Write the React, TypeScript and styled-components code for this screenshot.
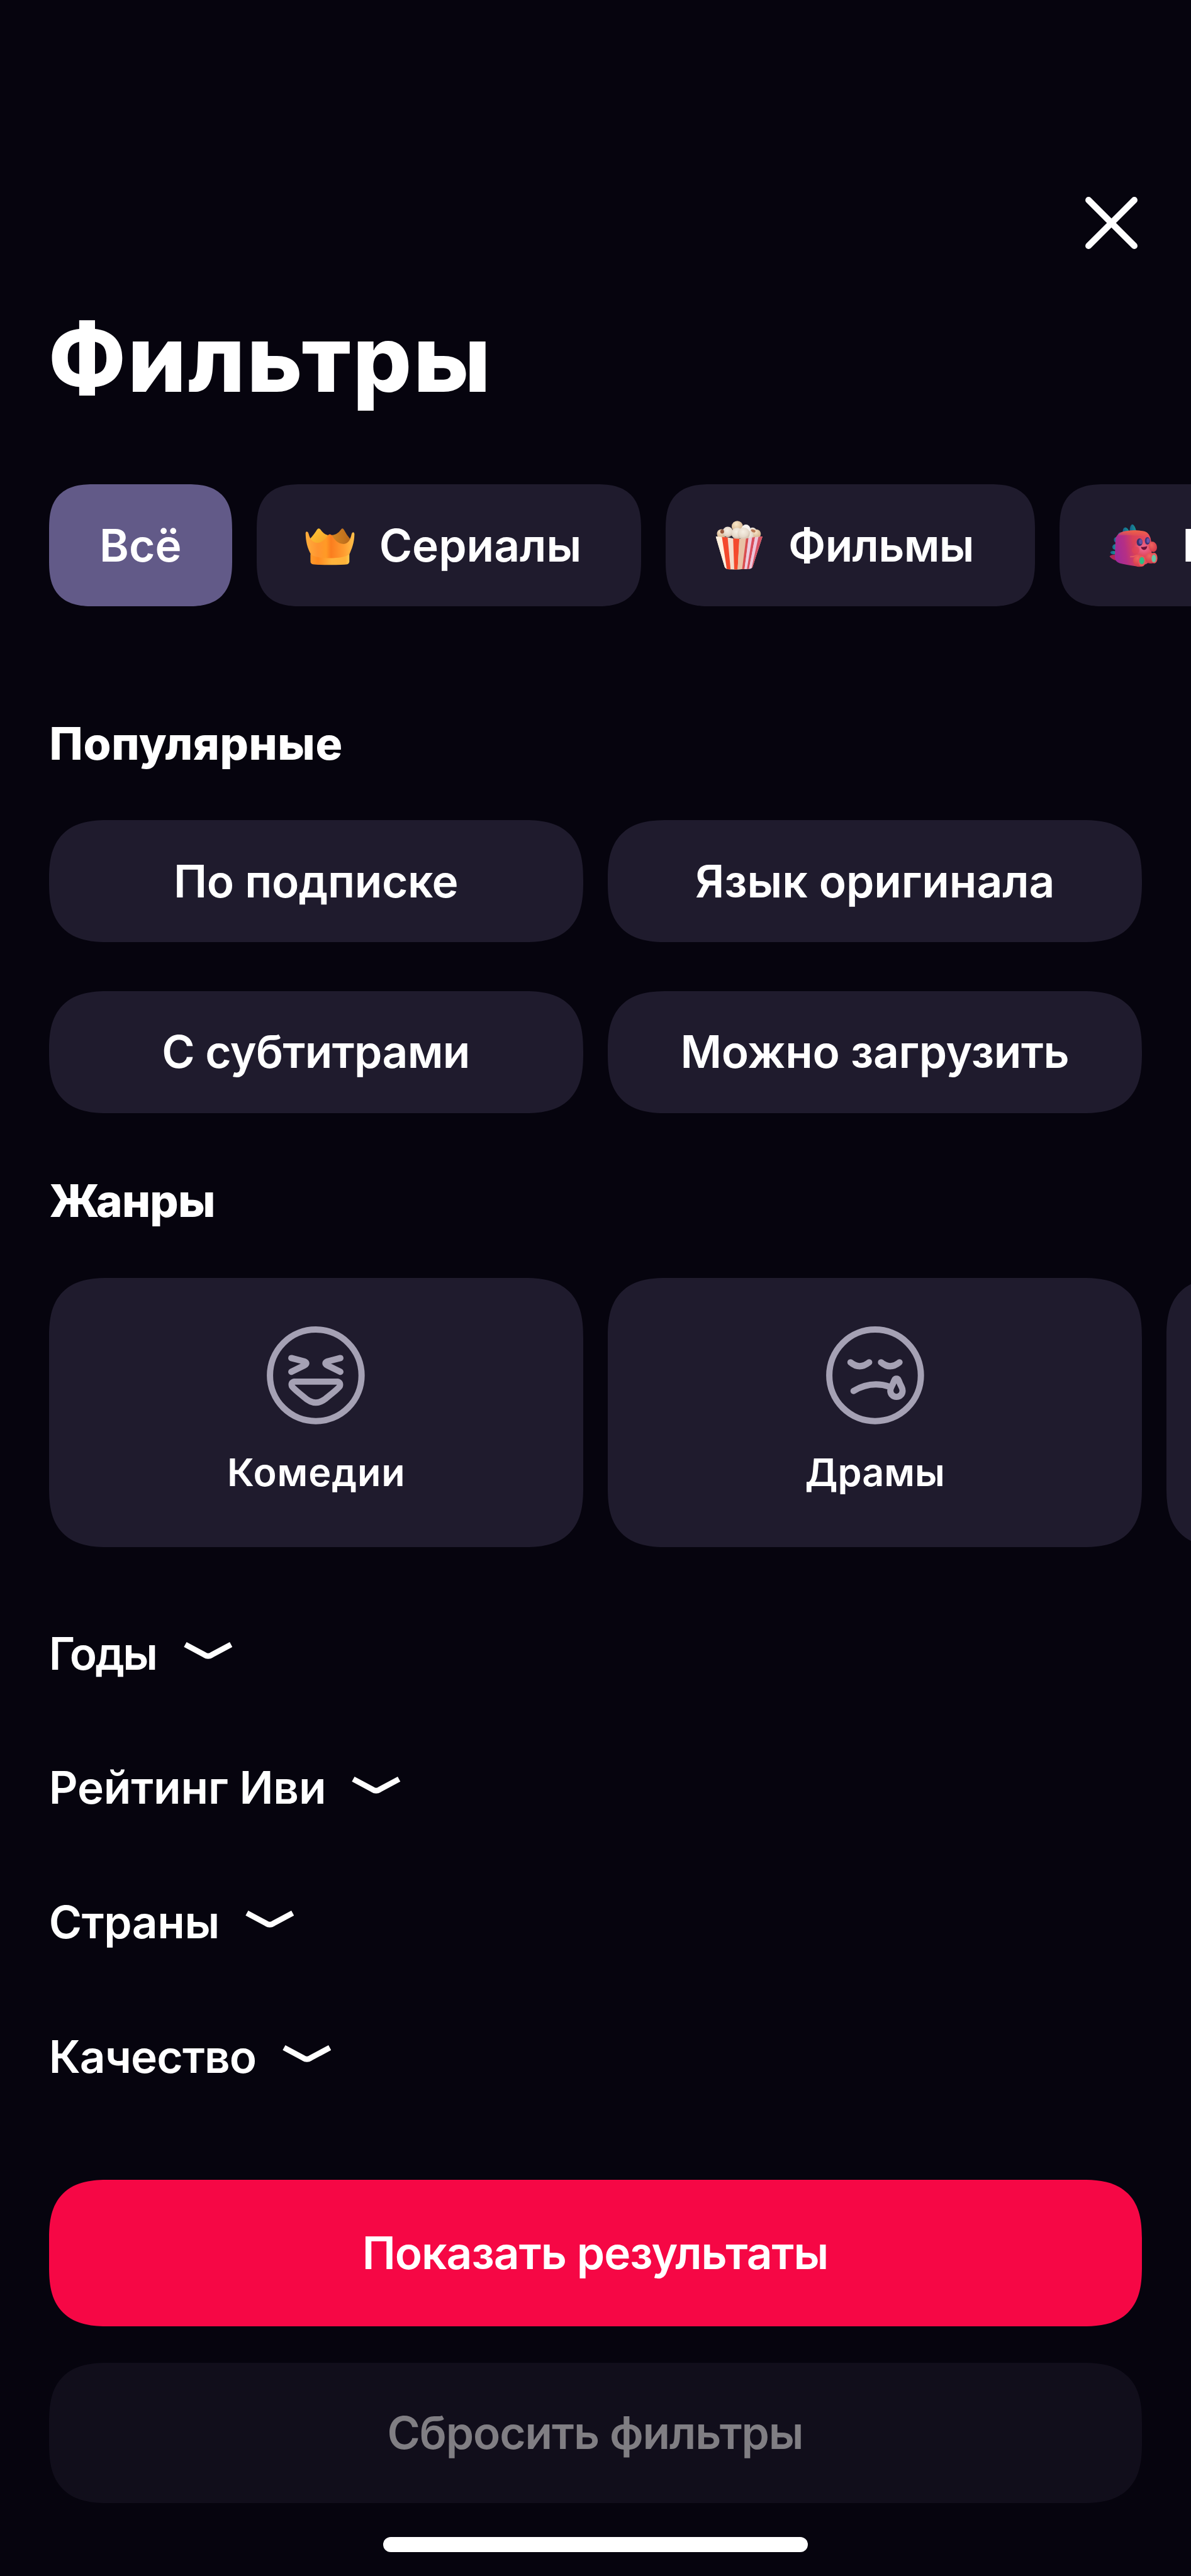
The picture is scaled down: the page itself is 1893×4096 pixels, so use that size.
import React from 'react';
import styled, { createGlobalStyle, css } from 'styled-components';

/* Design units are sixths of a point; the screen is 390pt wide. */
const UNIT = 1893 / 2340;
const u = (n: number) => `${(n * UNIT).toFixed(3)}px`;

const color = {
  bg: '#06040e',
  surface: '#1f1b2d',
  active: '#625a88',
  accent: '#f60745',
  disabled: '#110e1b',
  muted: '#a5a1b4',
};

const GlobalStyle = createGlobalStyle`
  html, body { margin: 0; padding: 0; background: ${color.bg}; }
  * { box-sizing: border-box; }
  button { font: inherit; color: inherit; border: 0; padding: 0; background: none; }
`;

const smallCorners = css`
  border-radius: ${u(73)};
  @supports (corner-shape: superellipse(1.4)) {
    border-radius: ${u(90)};
    corner-shape: superellipse(1.42);
  }
`;

const largeCorners = css`
  border-radius: ${u(96)};
  @supports (corner-shape: superellipse(1.4)) {
    border-radius: ${u(118)};
    corner-shape: superellipse(1.4);
  }
`;

const Screen = styled.main`
  display: flex;
  flex-direction: column;
  width: 1893px;
  height: 4096px;
  overflow: hidden;
  background: ${color.bg};
  color: #fff;
  font-family: Inter, 'Liberation Sans', sans-serif;
  font-size: ${u(88)};
  font-weight: 600;
  line-height: ${u(120)};
  white-space: nowrap;
`;

const TopBar = styled.header`
  display: flex;
  flex: none;
  justify-content: flex-end;
  height: ${u(597)};
  padding: ${u(378)} ${u(96)} 0;
`;

const CloseButton = styled.button`
  display: block;
  width: ${u(120)};
  height: ${u(120)};
  svg { display: block; width: 100%; height: 100%; }
`;

/* $track is the letter spacing; the margin drops it after the last letter. */
const Text = styled.span<{ $track?: number }>`
  display: inline-block;
  letter-spacing: ${(p) => p.$track ?? 0}px;
  margin-right: ${(p) => -(p.$track ?? 0)}px;
`;

const Title = styled.h1`
  flex: none;
  margin: 0;
  padding-left: ${u(95)};
  font-size: ${u(182)};
  font-weight: 800;
  line-height: ${u(216)};
`;

const Heading = styled.h2<{ $gap: number }>`
  flex: none;
  margin: ${(p) => u(p.$gap)} 0 0;
  padding-left: ${u(97)};
  font-size: ${u(88)};
  font-weight: 800;
  line-height: ${u(120)};
`;

const Scroller = styled.div<{ $gap: number }>`
  display: flex;
  flex: none;
  gap: ${u(48)};
  margin-top: ${(p) => u(p.$gap)};
  padding-left: ${u(96)};
  overflow: hidden;
`;

const Pill = styled.button<{ $width: number; $active?: boolean }>`
  display: flex;
  flex: none;
  align-items: center;
  justify-content: ${(p) => (p.$active ? 'center' : 'flex-start')};
  gap: ${u(37)};
  width: ${(p) => u(p.$width)};
  height: ${u(240)};
  padding: 0 ${u(84)};
  background: ${(p) => (p.$active ? color.active : color.surface)};
  ${smallCorners}
  svg { display: block; flex: none; width: ${u(120)}; height: ${u(120)}; }
`;

const OptionGrid = styled.div`
  display: grid;
  flex: none;
  grid-template-columns: 1fr 1fr;
  gap: ${u(96)} ${u(48)};
  margin-top: ${u(90)};
  padding: 0 ${u(96)};
`;

const Option = styled.button`
  height: ${u(240)};
  text-align: center;
  background: ${color.surface};
  ${largeCorners}
`;

const GenreCard = styled.button`
  display: flex;
  flex: none;
  flex-direction: column;
  align-items: center;
  gap: ${u(44)};
  width: ${u(1050)};
  height: ${u(529)};
  padding-top: ${u(92)};
  font-size: ${u(75.5)};
  line-height: ${u(96)};
  background: ${color.surface};
  ${largeCorners}
  svg { display: block; flex: none; width: ${u(200)}; height: ${u(200)}; }
`;

const Sections = styled.div`
  flex: none;
  margin-top: ${u(78)};
  padding-left: ${u(96)};
`;

const SectionRow = styled.button`
  display: flex;
  align-items: center;
  gap: ${u(50)};
  height: ${u(264)};
  svg { display: block; width: ${u(96)}; height: ${u(36)}; margin-bottom: ${u(12)}; }
`;

const Actions = styled.footer`
  display: flex;
  flex: none;
  flex-direction: column;
  gap: ${u(72)};
  margin-top: ${u(110)};
  padding: 0 ${u(96)};
`;

const Action = styled.button<{ $disabled?: boolean }>`
  height: ${(p) => u(p.$disabled ? 276 : 288)};
  text-align: center;
  color: ${(p) => (p.$disabled ? '#807e83' : '#fff')};
  background: ${(p) => (p.$disabled ? color.disabled : color.accent)};
  ${largeCorners}
`;

const HomeIndicator = styled.div`
  flex: none;
  align-self: center;
  width: ${u(834)};
  height: ${u(30)};
  margin-top: ${u(66)};
  border-radius: ${u(15)};
  background: #fff;
`;

const CloseIcon = () => (
  <svg viewBox="0 0 120 120" fill="none" stroke="#fff" strokeWidth="12.5" strokeLinecap="round">
    <path d="M15 15 105 105M105 15 15 105" />
  </svg>
);

const ChevronIcon = () => (
  <svg viewBox="0 0 96 36" fill="none" stroke="#fff" strokeWidth="11">
    <path d="M3 6 41 26.5Q48 31 55 26.5L93 6" />
  </svg>
);

const CrownIcon = () => (
  <svg viewBox="84 96 360 360">
    <defs>
      <linearGradient id="crownBack" x1="0" x2="1" y1="0" y2="1">
        <stop offset="0" stopColor="#ffca3a" />
        <stop offset="1" stopColor="#f29a22" />
      </linearGradient>
      <linearGradient id="crownShade" x1="0" x2="1">
        <stop offset="0" stopColor="#d98a24" />
        <stop offset="1" stopColor="#b9691a" />
      </linearGradient>
      <linearGradient id="crownFront" x1="0" x2="1">
        <stop offset="0" stopColor="#ffae3c" />
        <stop offset=".25" stopColor="#ff9430" />
        <stop offset=".42" stopColor="#ff9a25" />
        <stop offset=".52" stopColor="#fb7d1e" />
        <stop offset=".78" stopColor="#ff9c30" />
        <stop offset="1" stopColor="#ffc04a" />
      </linearGradient>
      <linearGradient id="crownBand" x1="0" x2="1">
        <stop offset="0" stopColor="#ff9a2b" />
        <stop offset=".2" stopColor="#ff8a20" />
        <stop offset=".55" stopColor="#ffb43c" />
        <stop offset=".9" stopColor="#ffb23a" />
        <stop offset="1" stopColor="#ffca50" />
      </linearGradient>
    </defs>
    <path fill="url(#crownBack)" d="M146 236Q174 205 187 182Q197 168 208 181Q226 208 250 214L262 250L160 275Z" />
    <path fill="url(#crownShade)" d="M258 214Q304 218 328 182Q337 168 346 182Q360 210 382 236L365 275L285 262Z" />
    <path
      fill="url(#crownFront)"
      d="M120 204Q120 193 128 193Q135 194 138 206C146 240 165 260 190 260C222 258 240 232 251 216Q263 202 275 216C288 240 310 266 345 267C372 264 384 240 391 208Q394 197 401 197Q408 198 408 208C407 260 392 296 377 330V362H150V325C130 290 121 250 120 204Z"
    />
    <path fill="url(#crownBand)" d="M149 327C180 358 345 358 378 327V372Q376 382 366 386Q340 390 264 390Q190 390 163 386Q150 382 149 372Z" />
  </svg>
);

const PopcornIcon = () => (
  <svg viewBox="66 96 360 360">
    <defs>
      <radialGradient id="corn" cx=".45" cy=".35" r=".7">
        <stop offset="0" stopColor="#f6efe4" />
        <stop offset=".6" stopColor="#e6dacb" />
        <stop offset="1" stopColor="#c3ae9b" />
      </radialGradient>
      <radialGradient id="cornWarm" cx=".4" cy=".3" r=".75">
        <stop offset="0" stopColor="#f8e7c9" />
        <stop offset="1" stopColor="#cfa982" />
      </radialGradient>
      <clipPath id="bucket">
        <path d="M109 222 150 226 180 228 215 234 250 236 290 234 325 228 385 222 326 402Q322 412 305 413L262 415Q225 420 185 416Q164 412 161 400Z" />
      </clipPath>
    </defs>
    <circle cx="143" cy="206" r="27" fill="url(#cornWarm)" />
    <circle cx="180" cy="196" r="31" fill="url(#corn)" />
    <ellipse cx="147" cy="193" rx="11" ry="12" fill="#9a573c" />
    <circle cx="326" cy="194" r="25" fill="url(#corn)" />
    <circle cx="348" cy="207" r="27" fill="url(#cornWarm)" />
    <ellipse cx="330" cy="189" rx="14" ry="8" fill="#b97855" transform="rotate(25 330 189)" />
    <circle cx="308" cy="218" r="26" fill="url(#corn)" />
    <circle cx="236" cy="163" r="33" fill="url(#cornWarm)" />
    <circle cx="287" cy="178" r="26" fill="#f7f3f0" />
    <circle cx="235" cy="204" r="34" fill="url(#corn)" />
    <circle cx="274" cy="205" r="36" fill="url(#corn)" />
    <g clipPath="url(#bucket)">
      <path fill="#f3dccb" d="M100 210H400V425H100Z" />
      <path fill="#fff0de" d="M105 215H145L178 420H150Z" />
      <path fill="#f4492c" d="M144 215H178L197 420H175Z" />
      <path fill="#f4492c" d="M211 215H250L238 420H218Z" />
      <path fill="#e8c1a5" d="M249 215H293L267 420H238Z" />
      <path fill="#d94d50" d="M290 215H306L278 420H264Z" />
      <path fill="#edcadd" d="M304 215H328L292 420H278Z" />
      <path fill="#d94d5c" d="M326 215H343L304 420H292Z" />
      <path fill="#edc5da" d="M343 215H364L320 420H304Z" />
      <path fill="#d65264" d="M363 215H395L335 420H318Z" />
    </g>
  </svg>
);

const DinoIcon = () => (
  <svg viewBox="318 246 360 360">
    <defs>
      <linearGradient id="dinoBody" x1="0" x2="1" y1=".35" y2=".2">
        <stop offset="0" stopColor="#a22b98" />
        <stop offset=".25" stopColor="#b52f85" />
        <stop offset=".5" stopColor="#d94158" />
        <stop offset="1" stopColor="#e84c60" />
      </linearGradient>
      <linearGradient id="dinoTop" x1="0" x2="0" y1="0" y2="1">
        <stop offset="0" stopColor="#ee6248" />
        <stop offset="1" stopColor="#ee6248" stopOpacity="0" />
      </linearGradient>
      <linearGradient id="dinoSpike" x1="0" x2="1">
        <stop offset="0" stopColor="#15608f" />
        <stop offset="1" stopColor="#199c94" />
      </linearGradient>
      <radialGradient id="dinoFoot" cx=".4" cy=".3" r=".75">
        <stop offset="0" stopColor="#f0655f" />
        <stop offset="1" stopColor="#cf3549" />
      </radialGradient>
      <radialGradient id="dinoMuzzle">
        <stop offset=".3" stopColor="#ed6790" stopOpacity=".85" />
        <stop offset="1" stopColor="#ed6384" stopOpacity="0" />
      </radialGradient>
    </defs>
    <g fill="url(#dinoSpike)">
      <path d="M479 345Q480 305 494 301Q508 300 520 345Z" />
      <path d="M438 349Q438 320 454 318Q468 320 478 345Z" />
      <path d="M408 370Q412 350 422 348Q434 348 440 354L420 372Z" />
      <path d="M400 408Q384 404 387 386Q392 375 408 374Z" />
      <path d="M396 451Q376 448 377 432Q380 419 397 418Z" />
      <path d="M396 478Q366 480 365 465Q370 454 396 459Z" />
    </g>
    <path fill="#b22657" d="M398 514Q372 505 361 490Q368 478 396 480Z" />
    <path fill="url(#dinoBody)" d="M396 385Q408 350 445 342Q510 330 568 342Q600 352 606 400L610 500Q600 530 560 540L520 548Q455 540 420 530Q392 520 392 492Z" />
    <path fill="url(#dinoTop)" d="M412 366Q423 346 445 342Q510 330 568 342Q590 348 600 378Q500 360 412 366Z" />
    <ellipse cx="560" cy="440" rx="58" ry="50" fill="url(#dinoMuzzle)" />
    <circle cx="515" cy="453" r="22" fill="#df4355" opacity=".7" />
    <ellipse cx="538" cy="406" rx="17" ry="23" fill="#37316e" />
    <ellipse cx="544" cy="403" rx="10" ry="15" fill="#6551a5" />
    <ellipse cx="584" cy="398" rx="15" ry="22" fill="#3d3479" />
    <ellipse cx="588" cy="396" rx="9" ry="14" fill="#6b53a9" />
    <path fill="#6e1238" d="M546 433Q564 436 583 430Q580 452 564 452Q549 450 546 433Z" />
    <ellipse cx="616" cy="433" rx="24" ry="31" fill="url(#dinoFoot)" transform="rotate(-15 616 433)" />
    <path fill="none" stroke="#f06a62" strokeWidth="7" strokeLinecap="round" opacity=".7" d="M484 492Q505 492 526 482" />
    <ellipse cx="604" cy="500" rx="34" ry="32" fill="url(#dinoFoot)" />
    <ellipse cx="624" cy="500" rx="19" ry="31" fill="#e9595c" />
    <ellipse cx="622" cy="502" rx="13" ry="22" fill="#67c6a5" />
    <ellipse cx="536" cy="515" rx="36" ry="36" fill="url(#dinoFoot)" />
    <ellipse cx="551" cy="517" rx="22" ry="32" fill="#e8575a" />
    <ellipse cx="551" cy="515" rx="15" ry="21" fill="#31bd83" />
  </svg>
);

const LaughIcon = () => (
  <svg viewBox="66 71 600 600" fill="none" stroke={color.muted} strokeWidth="37" strokeLinecap="round" strokeLinejoin="round">
    <circle cx="366" cy="371" r="270" />
    <path d="M222 269 299 289Q321 299 299 312L222 350" />
    <path d="M511 269 434 289Q412 299 434 312L511 350" />
    <path d="M240 408H493Q515 413 507 436Q498 450 438 497Q400 532 366 532Q332 532 294 497Q235 450 226 436Q217 413 240 408Z" />
  </svg>
);

const SadIcon = () => (
  <svg viewBox="60 71 600 600" fill="none" stroke={color.muted} strokeWidth="37" strokeLinecap="round" strokeLinejoin="round">
    <circle cx="360" cy="371" r="270" />
    <path d="M215 294Q268 340 325 294" />
    <path d="M395 294Q448 340 504 294" />
    <path d="M233 463Q335 402 446 438" />
    <path d="M486 391Q477 391 473 401Q466 420 456 439Q450 451 450 462A36 36 0 0 0 522 462Q522 451 516 439Q506 420 499 401Q495 391 486 391Z" />
  </svg>
);

const options = [
  { label: 'По подписке', track: -0.4 },
  { label: 'Язык оригинала', track: -0.05 },
  { label: 'С субтитрами', track: -0.65 },
  { label: 'Можно загрузить', track: -0.35 },
];

const sections = [
  { label: 'Годы', track: -2.7 },
  { label: 'Рейтинг Иви', track: -0.15 },
  { label: 'Страны', track: -0.45 },
  { label: 'Качество', track: -0.9 },
];

export default function App() {
  return (
    <>
      <GlobalStyle />
      <Screen>
        <TopBar>
          <CloseButton aria-label="Закрыть"><CloseIcon /></CloseButton>
        </TopBar>
        <Title><Text $track={2.6}>Фильтры</Text></Title>
        <Scroller $gap={139}>
          <Pill $width={360} $active><Text>Всё</Text></Pill>
          <Pill $width={756}><CrownIcon /><Text>Сериалы</Text></Pill>
          <Pill $width={726}><PopcornIcon /><Text $track={-0.7}>Фильмы</Text></Pill>
          <Pill $width={960}><DinoIcon /><Text>Мультфильмы</Text></Pill>
        </Scroller>

        <Heading $gap={210}><Text $track={0.65}>Популярные</Text></Heading>
        <OptionGrid>
          {options.map((o) => (
            <Option key={o.label}><Text $track={o.track}>{o.label}</Text></Option>
          ))}
        </OptionGrid>

        <Heading $gap={113}><Text $track={-0.8}>Жанры</Text></Heading>
        <Scroller $gap={90.5}>
          <GenreCard><LaughIcon /><Text $track={0.9}>Комедии</Text></GenreCard>
          <GenreCard><SadIcon /><Text>Драмы</Text></GenreCard>
          <GenreCard />
        </Scroller>

        <Sections>
          {sections.map((s) => (
            <SectionRow key={s.label}>
              <Text $track={s.track}>{s.label}</Text>
              <ChevronIcon />
            </SectionRow>
          ))}
        </Sections>

        <Actions>
          <Action><Text $track={-1}>Показать результаты</Text></Action>
          <Action $disabled><Text $track={-1.1}>Сбросить фильтры</Text></Action>
        </Actions>
        <HomeIndicator />
      </Screen>
    </>
  );
}
